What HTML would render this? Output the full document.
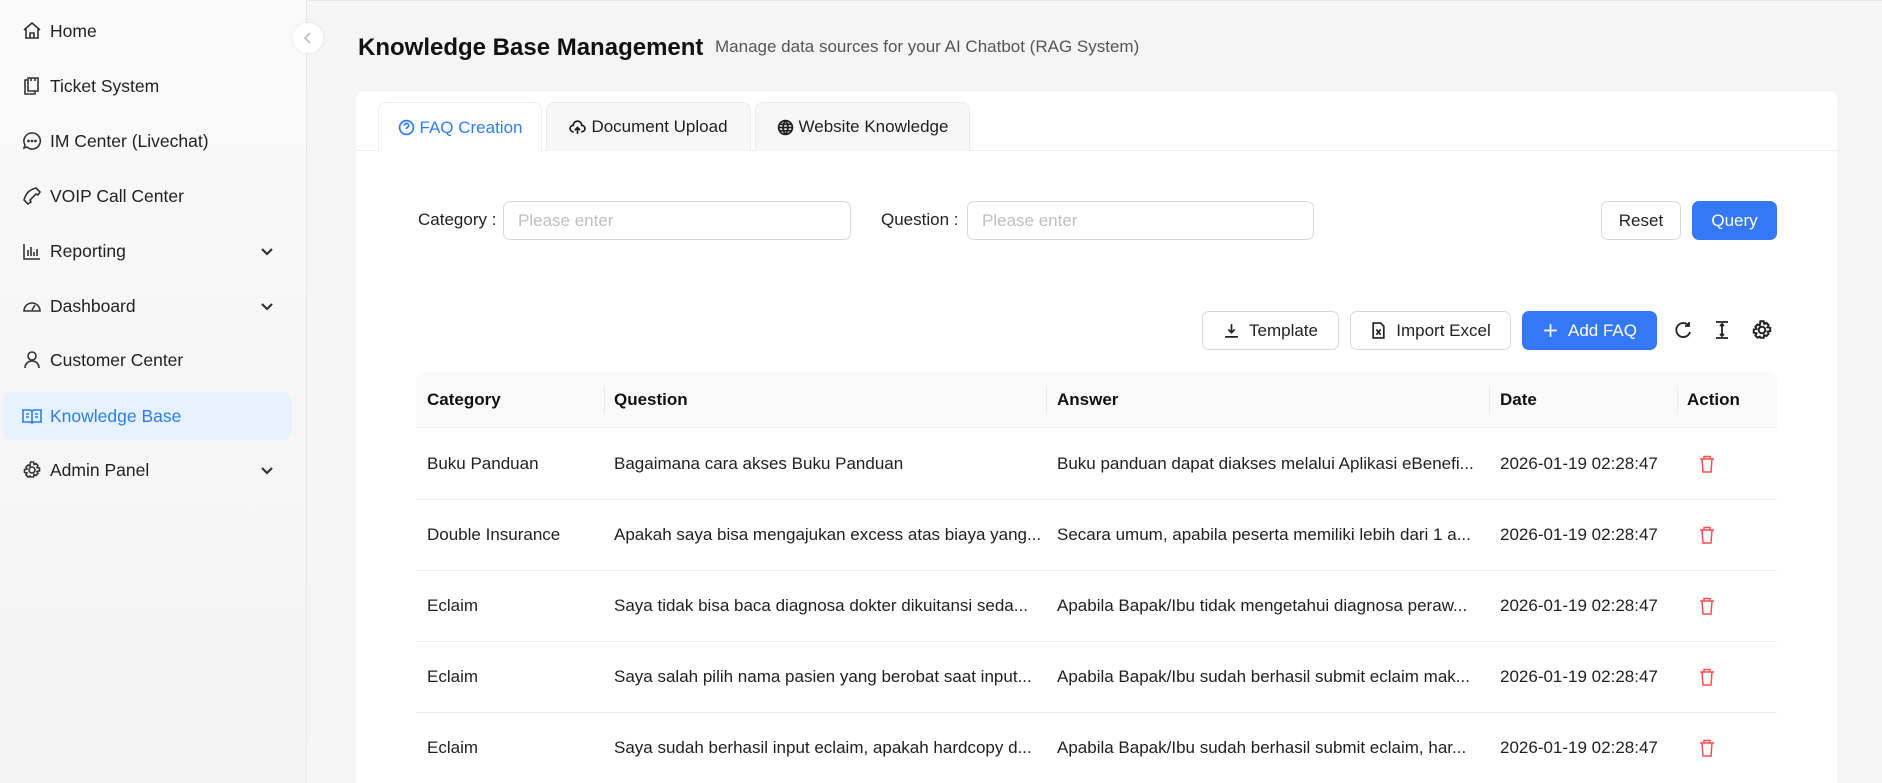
<!DOCTYPE html>
<html><head><meta charset="utf-8"><style>
*{box-sizing:border-box;margin:0;padding:0}
html,body{width:1882px;height:783px;overflow:hidden}
body{background:#f5f5f5;font-family:"Liberation Sans",sans-serif;color:#1f1f1f;position:relative;font-size:17px}
.side{position:absolute;left:0;top:0;width:307px;height:783px;background:linear-gradient(#fafafa,#f3f3f3);border-right:1px solid #e8e8e8}
.mi{position:absolute;left:3px;width:289px;height:48px;display:flex;align-items:center;font-size:17.5px;color:#222;border-radius:10px}
.mi svg{position:absolute;left:19px;width:20px;height:20px;fill:none;stroke:#333;stroke-width:1.6}
.mi span{position:absolute;left:47px}
.mi .ch{left:256px;width:16px;height:16px;stroke-width:2.2}
.mi.act{background:#e6f2ff;color:#2f7cf6}
.mi.act svg{stroke:#2f7cf6}
.col{position:absolute;left:293px;top:23px;width:30px;height:30px;border-radius:50%;background:#fff;box-shadow:0 0 4px rgba(0,0,0,.08)}
.top{position:absolute;left:308px;top:0;right:0;height:1px;background:#e8e8e8}
h1{position:absolute;left:358px;top:34px;font-size:24px;font-weight:600;color:#111;white-space:nowrap}
.sub{position:absolute;left:715px;top:37px;font-size:17px;color:#555}
.card{position:absolute;left:356px;top:91px;width:1481px;height:720px;background:#fff;border-radius:8px}
.tabline{position:absolute;left:356px;top:150px;width:1481px;height:1px;background:#ececec}
.tab{position:absolute;top:102px;height:49px;background:#f7f7f7;border:1px solid #ececec;border-bottom:none;border-radius:8px 8px 0 0;display:flex;align-items:center;justify-content:center;font-size:17px;gap:5px}
.tab.on{background:#fff;color:#2f7cf6;height:50px}
.tab svg{width:17px;height:17px;fill:none;stroke:currentColor;stroke-width:1.6}
.lbl{position:absolute;top:210px;font-size:17px;color:#222}
.inp{position:absolute;top:201px;height:39px;border:1px solid #d9d9d9;border-radius:7px;padding-left:14px;line-height:37px;color:#bfbfbf;font-size:17px}
.btn{position:absolute;height:39px;border:1px solid #d9d9d9;border-radius:7px;background:#fff;display:flex;align-items:center;justify-content:center;gap:9px;font-size:17px;color:#222}
.btn.p{background:#3478f6;border-color:#3478f6;color:#fff}
.btn svg{width:17px;height:17px;fill:none;stroke:currentColor;stroke-width:1.6}
.ic{position:absolute;top:319px;width:22px;height:22px;fill:none;stroke:#222;stroke-width:1.8}
.th{position:absolute;left:416px;top:372px;width:1361px;height:56px;background:#fafafa;border-bottom:1px solid #eee;border-radius:8px 8px 0 0}
.c{position:absolute;font-size:17px;white-space:nowrap}
.hd{font-weight:600;top:390px;color:#111}
.sep{position:absolute;top:386px;width:1px;height:28px;background:#ebebeb}
.rl{position:absolute;left:416px;width:1361px;height:1px;background:#eee}
.del{position:absolute;left:1699px;width:16px;height:18px;fill:none;stroke:#ff4d4f;stroke-width:1.5}
</style></head><body>
<div class="side">
<div class="mi" style="top:7px"><svg viewBox="0 0 20 20"><path d="M2 9L10 2l8 7M4 8v9h12V8M8 17v-5h4v5"/></svg><span>Home</span></div>
<div class="mi" style="top:62px"><svg viewBox="0 0 20 20"><path d="M6 4H3v14h10v-3M6 2h10v13H6zM9 2v3M13 2v3"/></svg><span>Ticket System</span></div>
<div class="mi" style="top:117px"><svg viewBox="0 0 20 20"><path d="M10 2a8 8 0 1 1-5 14l-3 1 1-3A8 8 0 0 1 10 2z"/><circle cx="6.5" cy="10" r=".6"/><circle cx="10" cy="10" r=".6"/><circle cx="13.5" cy="10" r=".6"/></svg><span>IM Center (Livechat)</span></div>
<div class="mi" style="top:172px"><svg viewBox="0 0 20 20"><path d="M14 2l4 4-2 3-2-1-6 6 1 2-3 2-4-4c2-7 5-10 12-12z"/></svg><span>VOIP Call Center</span></div>
<div class="mi" style="top:227px"><svg viewBox="0 0 20 20"><path d="M2 3v15h16M6 15V9M9 15V6M12 15v-4M15 15V8"/></svg><span>Reporting</span><svg class="ch" viewBox="0 0 16 16"><path d="M3 6l5 5 5-5"/></svg></div>
<div class="mi" style="top:282px"><svg viewBox="0 0 20 20"><path d="M2 15a8 8 0 1 1 16 0zM10 14l3-5"/></svg><span>Dashboard</span><svg class="ch" viewBox="0 0 16 16"><path d="M3 6l5 5 5-5"/></svg></div>
<div class="mi" style="top:336px"><svg viewBox="0 0 20 20"><circle cx="10" cy="6" r="4"/><path d="M3 18c0-4 3-7 7-7s7 3 7 7"/></svg><span>Customer Center</span></div>
<div class="mi act" style="top:392px"><svg viewBox="0 0 20 20"><path d="M1 4h7l2 1 2-1h7v12h-7l-2 1-2-1H1zM10 5v12M4 8h3M4 11h3M13 8h3M13 11h3"/></svg><span>Knowledge Base</span></div>
<div class="mi" style="top:446px"><svg viewBox="0 0 20 20"><circle cx="10" cy="10" r="3"/><path d="M8.5 2h3l.5 2.5 2-1 2 2-1 2 2.5.5v3l-2.5.5 1 2-2 2-2-1-.5 2.5h-3L8 16l-2 1-2-2 1-2-2.5-.5v-3L5 9 4 7l2-2 2 1z"/></svg><span>Admin Panel</span><svg class="ch" viewBox="0 0 16 16"><path d="M3 6l5 5 5-5"/></svg></div>
</div>
<div class="col"><svg viewBox="0 0 30 30" width="30" height="30"><path d="M17 10l-5 5 5 5" fill="none" stroke="#bbb" stroke-width="1.6"/></svg></div>
<div class="top"></div>
<h1>Knowledge Base Management</h1>
<div class="sub">Manage data sources for your AI Chatbot (RAG System)</div>
<div class="card"></div>
<div class="tabline"></div>
<div class="tab on" style="left:378px;width:164px"><svg viewBox="0 0 16 16"><circle cx="8" cy="8" r="6.5"/><path d="M6 6.2a2 2 0 1 1 2.5 1.9c-.4.2-.5.5-.5 1v.6M8 11.5v.3"/></svg>FAQ Creation</div>
<div class="tab" style="left:546px;width:205px"><svg viewBox="0 0 16 16"><path d="M4.5 12H4a3 3 0 0 1 0-6 4 4 0 0 1 8 0 3 3 0 0 1 0 6h-.5M8 14V8M5.5 10.5L8 8l2.5 2.5"/></svg>Document Upload</div>
<div class="tab" style="left:755px;width:215px"><svg viewBox="0 0 16 16"><circle cx="8" cy="8" r="6.5"/><path d="M1.5 8h13M8 1.5c-3 3.5-3 9.5 0 13M8 1.5c3 3.5 3 9.5 0 13M2.5 5h11M2.5 11h11"/></svg>Website Knowledge</div>
<div class="lbl" style="left:418px">Category :</div>
<div class="inp" style="left:503px;width:348px">Please enter</div>
<div class="lbl" style="left:881px">Question :</div>
<div class="inp" style="left:967px;width:347px">Please enter</div>
<div class="btn" style="left:1601px;top:201px;width:80px">Reset</div>
<div class="btn p" style="left:1692px;top:201px;width:85px">Query</div>
<div class="btn" style="left:1202px;top:311px;width:137px"><svg viewBox="0 0 16 16"><path d="M8 2v8M5 7l3 3 3-3M2 14h12"/></svg>Template</div>
<div class="btn" style="left:1350px;top:311px;width:161px"><svg viewBox="0 0 16 16"><path d="M3 1h7l3 3v11H3zM6 7l4 5M10 7l-4 5"/></svg>Import Excel</div>
<div class="btn p" style="left:1522px;top:311px;width:135px"><svg viewBox="0 0 16 16"><path d="M8 2v12M2 8h12"/></svg>Add FAQ</div>
<svg class="ic" style="left:1672px" viewBox="0 0 22 22"><path d="M17 7a7 7 0 1 0 1 6M17 3v4h-4"/></svg>
<svg class="ic" style="left:1711px" viewBox="0 0 22 22"><path d="M5 3h12M5 19h12M11 5v12M9 7l2-2 2 2M9 15l2 2 2-2"/></svg>
<svg class="ic" style="left:1751px" viewBox="0 0 20 20"><circle cx="10" cy="10" r="3"/><path d="M8.5 2h3l.5 2.5 2-1 2 2-1 2 2.5.5v3l-2.5.5 1 2-2 2-2-1-.5 2.5h-3L8 16l-2 1-2-2 1-2-2.5-.5v-3L5 9 4 7l2-2 2 1z"/></svg>
<div class="th"></div>
<div class="c hd" style="left:427px">Category</div>
<div class="c hd" style="left:614px">Question</div>
<div class="c hd" style="left:1057px">Answer</div>
<div class="c hd" style="left:1500px">Date</div>
<div class="c hd" style="left:1687px">Action</div>
<div class="sep" style="left:604px"></div><div class="sep" style="left:1046px"></div><div class="sep" style="left:1489px"></div><div class="sep" style="left:1677px"></div>

<div class="c" style="left:427px;top:454px">Buku Panduan</div>
<div class="c" style="left:614px;top:454px">Bagaimana cara akses Buku Panduan</div>
<div class="c" style="left:1057px;top:454px">Buku panduan dapat diakses melalui Aplikasi eBenefi...</div>
<div class="c" style="left:1500px;top:454px">2026-01-19 02:28:47</div>
<svg class="del" style="top:455px" viewBox="0 0 16 18"><path d="M1 4h14M5 4V1.5h6V4M3 4l1 13h8l1-13"/></svg>
<div class="rl" style="top:499px"></div>

<div class="c" style="left:427px;top:525px">Double Insurance</div>
<div class="c" style="left:614px;top:525px">Apakah saya bisa mengajukan excess atas biaya yang...</div>
<div class="c" style="left:1057px;top:525px">Secara umum, apabila peserta memiliki lebih dari 1 a...</div>
<div class="c" style="left:1500px;top:525px">2026-01-19 02:28:47</div>
<svg class="del" style="top:526px" viewBox="0 0 16 18"><path d="M1 4h14M5 4V1.5h6V4M3 4l1 13h8l1-13"/></svg>
<div class="rl" style="top:570px"></div>

<div class="c" style="left:427px;top:596px">Eclaim</div>
<div class="c" style="left:614px;top:596px">Saya tidak bisa baca diagnosa dokter dikuitansi seda...</div>
<div class="c" style="left:1057px;top:596px">Apabila Bapak/Ibu tidak mengetahui diagnosa peraw...</div>
<div class="c" style="left:1500px;top:596px">2026-01-19 02:28:47</div>
<svg class="del" style="top:597px" viewBox="0 0 16 18"><path d="M1 4h14M5 4V1.5h6V4M3 4l1 13h8l1-13"/></svg>
<div class="rl" style="top:641px"></div>

<div class="c" style="left:427px;top:667px">Eclaim</div>
<div class="c" style="left:614px;top:667px">Saya salah pilih nama pasien yang berobat saat input...</div>
<div class="c" style="left:1057px;top:667px">Apabila Bapak/Ibu sudah berhasil submit eclaim mak...</div>
<div class="c" style="left:1500px;top:667px">2026-01-19 02:28:47</div>
<svg class="del" style="top:668px" viewBox="0 0 16 18"><path d="M1 4h14M5 4V1.5h6V4M3 4l1 13h8l1-13"/></svg>
<div class="rl" style="top:712px"></div>

<div class="c" style="left:427px;top:738px">Eclaim</div>
<div class="c" style="left:614px;top:738px">Saya sudah berhasil input eclaim, apakah hardcopy d...</div>
<div class="c" style="left:1057px;top:738px">Apabila Bapak/Ibu sudah berhasil submit eclaim, har...</div>
<div class="c" style="left:1500px;top:738px">2026-01-19 02:28:47</div>
<svg class="del" style="top:739px" viewBox="0 0 16 18"><path d="M1 4h14M5 4V1.5h6V4M3 4l1 13h8l1-13"/></svg>
</body></html>
